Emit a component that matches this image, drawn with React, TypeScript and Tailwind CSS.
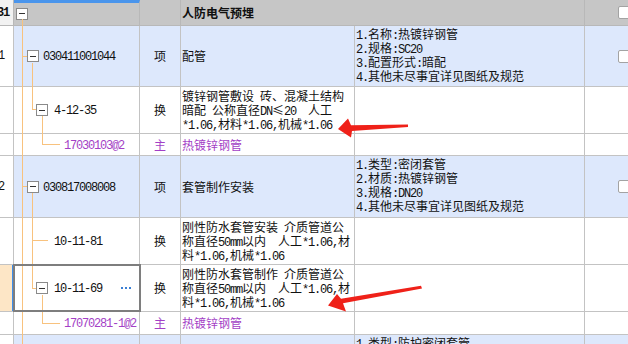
import React from "react";

const MONO = "font-['Liberation_Mono',monospace] text-[12px] tracking-[-1.2px]";

function T({ s, className = "" }: { s: string; className?: string }) {
  const parts = s.match(/[\x20-\x7e]+|[^\x20-\x7e]+/g) || [];
  return (
    <span className={"whitespace-pre " + className}>
      {parts.map((p, i) =>
        /^[\x20-\x7e]/.test(p) ? (
          <span key={i} className={MONO}>
            {p}
          </span>
        ) : (
          <span key={i}>{p}</span>
        )
      )}
    </span>
  );
}

function Lines({ lines, className = "" }: { lines: string[]; className?: string }) {
  return (
    <div className={"flex flex-col " + className}>
      {lines.map((l, i) => (
        <div key={i} className="leading-[14px] h-[14px]">
          <T s={l} />
        </div>
      ))}
    </div>
  );
}

function Box() {
  return (
    <div className="w-[12px] h-[12px] shrink-0 border border-[#8a8a8a] bg-white flex items-center justify-center">
      <div className="w-[6px] h-[1px] bg-[#333]" />
    </div>
  );
}

function Check() {
  return <div className="w-[13px] h-[13px] shrink-0 rounded-[2px] border border-[#a3a3a3] bg-white" />;
}

type RowProps = {
  h: string;
  bg: string;
  c0?: React.ReactNode;
  c0cls?: string;
  c1: React.ReactNode;
  c1cls?: string;
  c2?: string;
  c3?: React.ReactNode;
  c4?: React.ReactNode;
  check?: boolean;
  purple?: boolean;
};

function Row({ h, bg, c0, c0cls = "", c1, c1cls = "", c2, c3, c4, check, purple }: RowProps) {
  const tc = purple ? "text-[#a33fc6]" : "text-[#111]";
  return (
    <div className={"flex shrink-0 border-b border-[#c3c3c3] " + h + " " + bg}>
      <div className={"w-[14px] shrink-0 border-r border-[#c3c3c3] bg-white overflow-hidden flex items-center text-[#111] " + c0cls}>
        {c0}
      </div>
      <div className={"w-[126px] shrink-0 border-r border-[#c3c3c3] flex items-center " + tc + " " + c1cls}>{c1}</div>
      <div className={"w-[41px] shrink-0 border-r border-[#c3c3c3] flex items-center justify-center " + tc}>{c2}</div>
      <div className={"w-[174px] shrink-0 border-r border-[#c3c3c3] flex items-center pl-[1px] " + tc}>{c3}</div>
      <div className="w-[230px] shrink-0 border-r border-[#c3c3c3] flex items-center pl-[1px] text-[#111]">{c4}</div>
      <div className="flex-1 flex items-center pl-[33px] overflow-hidden">{check ? <Check /> : null}</div>
    </div>
  );
}

export default function App() {
  const orange = "#f8c27e";
  return (
    <div className="relative w-[628px] h-[344px] overflow-hidden bg-white font-['Noto_Sans_CJK_SC',sans-serif] text-[12px] leading-[14px]">
      {/* header */}
      <div className="flex h-[26px] border-b border-[#b8b8b8] bg-[#c6c6c6]">
        <div className="w-[14px] shrink-0 border-r border-[#b8b8b8] bg-[#f2f2f2] overflow-hidden flex items-center">
          <span className={"ml-[-3px] font-bold text-[#111] " + MONO}>31</span>
        </div>
        <div className="w-[126px] shrink-0 border-r border-[#b8b8b8] border-t-[3px] border-t-[#4a95ec] flex items-center pl-[2px] pb-[1px]">
          <Box />
        </div>
        <div className="w-[41px] shrink-0 border-r border-[#b8b8b8]" />
        <div className="w-[404px] shrink-0 border-r border-[#b8b8b8] flex items-center pl-[1px] font-bold text-[#111]">
          人防电气预埋
        </div>
        <div className="flex-1 flex items-center pl-[33px] overflow-hidden">
          <Check />
        </div>
      </div>

      <Row
        h="h-[61px]"
        bg="bg-[#dde8fc]"
        c0={<span className={"ml-[-2px] " + MONO}>1</span>}
        c1={
          <div className="flex items-center pl-[13px] gap-[4px]">
            <Box />
            <T s="030411001044" />
          </div>
        }
        c2="项"
        c3={<span>配管</span>}
        c4={<Lines lines={["1.名称:热镀锌钢管", "2.规格:SC20", "3.配置形式:暗配", "4.其他未尽事宜详见图纸及规范"]} className="-mt-[3px]" />}
        check
      />
      <Row
        h="h-[47px]"
        bg="bg-white"
        c1={
          <div className="flex items-center pl-[22px] gap-[6px]">
            <Box />
            <T s="4-12-35" />
          </div>
        }
        c2="换"
        c3={<Lines lines={["镀锌钢管敷设 砖、混凝土结构", "暗配 公称直径DN≤20  人工", "*1.06,材料*1.06,机械*1.06"]} />}
      />
      <Row
        h="h-[22px]"
        bg="bg-white"
        purple
        c1={
          <div className="pl-[50px]">
            <T s="17030103@2" />
          </div>
        }
        c2="主"
        c3={<span>热镀锌钢管</span>}
      />
      <Row
        h="h-[62px]"
        bg="bg-[#dde8fc]"
        c0={<span className={"ml-[-2px] " + MONO}>2</span>}
        c1={
          <div className="flex items-center pl-[13px] gap-[4px]">
            <Box />
            <T s="030817008008" />
          </div>
        }
        c2="项"
        c3={<span>套管制作安装</span>}
        c4={<Lines lines={["1.类型:密闭套管", "2.材质:热镀锌钢管", "3.规格:DN20", "4.其他未尽事宜详见图纸及规范"]} className="-mt-[3px]" />}
        check
      />
      <Row
        h="h-[47px]"
        bg="bg-white"
        c1={
          <div className="pl-[40px]">
            <T s="10-11-81" />
          </div>
        }
        c2="换"
        c3={<Lines lines={["刚性防水套管安装 介质管道公", "称直径50mm以内  人工*1.06,材", "料*1.06,机械*1.06"]} />}
      />
      <Row
        h="h-[47px]"
        bg="bg-white"
        c0cls="!bg-[#fde6c6] !border-r-2 !border-[#3e8eea]"
        c1cls="relative z-10 outline-2 outline-[#7e7e7e] -outline-offset-1"
        c1={
          <div className="flex items-center w-full pl-[22px]">
            <Box />
            <div className="ml-[6px]">
              <T s="10-11-69" />
            </div>
            <div className="ml-auto mr-[8px] flex gap-[2px]">
              <div className="w-[2px] h-[2px] bg-[#3a7fd4]" />
              <div className="w-[2px] h-[2px] bg-[#3a7fd4]" />
              <div className="w-[2px] h-[2px] bg-[#3a7fd4]" />
            </div>
          </div>
        }
        c2="换"
        c3={<Lines lines={["刚性防水套管制作 介质管道公", "称直径50mm以内  人工*1.06,材", "料*1.06,机械*1.06"]} />}
      />
      <Row
        h="h-[23px]"
        bg="bg-white"
        purple
        c1={
          <div className="pl-[50px]">
            <T s="17070281-1@2" />
          </div>
        }
        c2="主"
        c3={<span>热镀锌钢管</span>}
      />
      <Row
        h="h-[61px]"
        bg="bg-[#dde8fc]"
        c0={<span className={"ml-[-2px] " + MONO}>3</span>}
        c1={
          <div className="flex items-center pl-[13px] gap-[4px]">
            <Box />
            <T s="030817008009" />
          </div>
        }
        c2="项"
        c3={<span>套管制作安装</span>}
        c4={<Lines lines={["1.类型:防护密闭套管", "2.材质:热镀锌钢管", "3.规格:DN20", "4.其他未尽事宜详见图纸及规范"]} className="-mt-[3px]" />}
        check
      />

      {/* tree connector lines */}
      <svg className="absolute left-0 top-0 pointer-events-none" width="628" height="344">
        <g stroke={orange} strokeWidth="1" fill="none" shapeRendering="crispEdges">
          <line x1="22.5" y1="19" x2="22.5" y2="344" />
          <line x1="22" y1="56.5" x2="27" y2="56.5" />
          <line x1="32.5" y1="63" x2="32.5" y2="109.5" />
          <line x1="32" y1="109.5" x2="36" y2="109.5" />
          <line x1="42.5" y1="116" x2="42.5" y2="144.5" />
          <line x1="42" y1="144.5" x2="60" y2="144.5" />
          <line x1="22" y1="186.5" x2="27" y2="186.5" />
          <line x1="32.5" y1="193" x2="32.5" y2="288.5" />
          <line x1="32" y1="240.5" x2="48" y2="240.5" />
          <line x1="32" y1="288.5" x2="36" y2="288.5" />
          <line x1="42.5" y1="295" x2="42.5" y2="323.5" />
          <line x1="42" y1="323.5" x2="60" y2="323.5" />
        </g>
      </svg>

      {/* red annotation arrows */}
      <svg className="absolute left-0 top-0 pointer-events-none z-20" width="628" height="344">
        <polygon
          fill="#ef2119"
          points="338,129 348,118.5 351,125.2 408,124.4 408,127 352,131 351,137.5"
        />
        <polygon
          fill="#ef2119"
          points="328,305.5 337,294 341,298.8 421,285.8 422,288.6 343,303.2 346,311.5"
        />
      </svg>
    </div>
  );
}
